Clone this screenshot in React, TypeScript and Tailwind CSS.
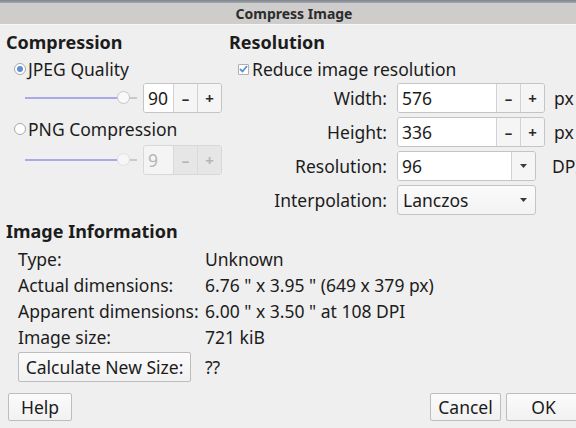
import React from 'react';

const font = { fontFamily: '"Noto Sans", "DejaVu Sans", sans-serif' };

function Radio({ checked }: { checked?: boolean }) {
  return (
    <span className="flex h-[12px] w-[12px] items-center justify-center rounded-full border border-[#a9a9a9] bg-white">
      {checked && <span className="h-[6px] w-[6px] rounded-full bg-[#5b8fd6]" />}
    </span>
  );
}

function Slider({ disabled }: { disabled?: boolean }) {
  return (
    <div className="relative h-[14px] w-[112px] shrink-0">
      <div className="absolute left-0 top-[6px] h-[2px] w-[96px] bg-[#a9a8ee]" />
      <div className="absolute left-[104px] top-[6px] h-[2px] w-[8px] bg-[#c9c9c9]" />
      <div
        className={
          'absolute left-[92px] top-0 h-[13px] w-[13px] rounded-full border ' +
          (disabled ? 'border-[#e0e0e0] bg-[#f6f6f6]' : 'border-[#c6c6c6] bg-[#f9f9f9]')
        }
      />
    </div>
  );
}

function SpinBox({
  value,
  width,
  disabled,
}: {
  value: string;
  width: string;
  disabled?: boolean;
}) {
  const btn =
    'flex w-[24px] items-center justify-center border-l text-[15px] font-bold ' +
    (disabled
      ? 'border-[#dadada] bg-[#e6e6e6] text-[#b5b5b5]'
      : 'border-[#d2d2d2] bg-[#f5f5f5] text-[#2a2a2a]');
  return (
    <div
      className={
        'flex h-[30px] shrink-0 overflow-hidden rounded-[3px] border ' +
        (disabled ? 'border-[#d8d8d8]' : 'border-[#c4c4c4]')
      }
    >
      <div
        className={
          'flex items-center pl-[4px] ' +
          width +
          (disabled ? ' bg-[#f4f4f4] text-[#b5b5b5]' : ' bg-white text-[#1c1c1c]')
        }
      >
        {value}
      </div>
      <div className={btn}>–</div>
      <div className={btn}>+</div>
    </div>
  );
}

function Arrow() {
  return (
    <svg width="7" height="4" viewBox="0 0 7 4">
      <path d="M0 0 L7 0 L3.5 4 Z" fill="#3a3a3a" />
    </svg>
  );
}

function Button({ children, className }: { children: React.ReactNode; className: string }) {
  return (
    <div
      className={
        'flex shrink-0 items-center justify-center rounded-[2px] border border-[#bdbdbd] bg-gradient-to-b from-[#fbfbfb] to-[#f1f1f1] text-[#1c1c1c] ' +
        className
      }
    >
      {children}
    </div>
  );
}

function FieldRow({ label, children }: { label: string; children: React.ReactNode }) {
  return (
    <div className="flex h-[30px] items-center">
      <div className="w-[158px] shrink-0 text-right">{label}</div>
      <div className="ml-[10px] flex items-center whitespace-nowrap">{children}</div>
    </div>
  );
}

export default function App() {
  const info: [string, string][] = [
    ['Type:', 'Unknown'],
    ['Actual dimensions:', '6.76 " x 3.95 " (649 x 379 px)'],
    ['Apparent dimensions:', '6.00 " x 3.50 " at 108 DPI'],
    ['Image size:', '721 kiB'],
  ];

  return (
    <div
      className="relative flex h-[428px] w-[576px] flex-col overflow-hidden bg-[#efefef] text-[17.5px] leading-[20px] text-[#1c1c1c]"
      style={font}
    >
      {/* window title */}
      <div className="h-[3px] bg-gradient-to-b from-[#7d848d] to-[#a3a8ae]" />
      <div className="flex h-[22px] items-center justify-center border-b border-[#f7f7f7] bg-[#cecdcb] pl-[12px] text-[14px] font-bold text-[#2c2c2c]">
        Compress Image
      </div>

      <div className="flex pt-[7px]">
        {/* compression */}
        <div className="flex w-[229px] shrink-0 flex-col pl-[6px]">
          <div className="h-[22px] text-[18px] font-bold">Compression</div>
          <div className="mt-[2px] flex h-[26px] items-center gap-[2px] pl-[8px]">
            <Radio checked />
            <span>JPEG Quality</span>
          </div>
          <div className="mt-[1px] flex h-[30px] items-center pl-[19px]">
            <Slider />
            <div className="ml-[6px]">
              <SpinBox value="90" width="w-[29px]" />
            </div>
          </div>
          <div className="mt-[3px] flex h-[26px] items-center gap-[2px] pl-[8px]">
            <Radio />
            <span>PNG Compression</span>
          </div>
          <div className="mt-[3px] flex h-[30px] items-center pl-[19px]">
            <Slider disabled />
            <div className="ml-[6px]">
              <SpinBox value="9" width="w-[29px]" disabled />
            </div>
          </div>
        </div>

        {/* resolution */}
        <div className="flex min-w-0 flex-1 flex-col">
          <div className="h-[22px] text-[18px] font-bold">Resolution</div>
          <div className="mt-[2px] flex h-[26px] items-center gap-[3px] pl-[9px]">
            <span className="flex h-[11px] w-[11px] items-center justify-center rounded-[1px] border border-[#b0b0b0] bg-white">
              <svg width="9" height="8" viewBox="0 0 9 8">
                <path d="M1 4 L3.5 6.5 L8 1" stroke="#5b8fd6" strokeWidth="1.8" fill="none" />
              </svg>
            </span>
            <span>Reduce image resolution</span>
          </div>
          <div className="mt-[1px] flex flex-col gap-[4px]">
            <FieldRow label="Width:">
              <SpinBox value="576" width="w-[98px]" />
              <span className="ml-[9px]">px</span>
            </FieldRow>
            <FieldRow label="Height:">
              <SpinBox value="336" width="w-[98px]" />
              <span className="ml-[9px]">px</span>
            </FieldRow>
            <FieldRow label="Resolution:">
              <div className="flex h-[30px] w-[139px] shrink-0 overflow-hidden rounded-[3px] border border-[#c4c4c4]">
                <div className="flex flex-1 items-center bg-white pl-[4px]">96</div>
                <div className="flex w-[24px] items-center justify-center border-l border-[#d2d2d2] bg-[#f5f5f5]">
                  <Arrow />
                </div>
              </div>
              <span className="ml-[16px]">DPI</span>
            </FieldRow>
            <FieldRow label="Interpolation:">
              <div className="flex h-[30px] w-[139px] shrink-0 items-center justify-between rounded-[3px] border border-[#c4c4c4] bg-gradient-to-b from-[#fbfbfb] to-[#f3f3f3] pl-[5px] pr-[8px]">
                <span>Lanczos</span>
                <Arrow />
              </div>
            </FieldRow>
          </div>
        </div>
      </div>

      {/* image information */}
      <div className="mt-[6px] flex flex-col pl-[6px]">
        <div className="h-[22px] text-[18px] font-bold">Image Information</div>
        <div className="mt-[3px] flex flex-col pl-[12px]">
          {info.map(([k, v]) => (
            <div key={k} className="flex h-[26px] items-center">
              <div className="w-[187px] shrink-0">{k}</div>
              <div className="whitespace-nowrap">{v}</div>
            </div>
          ))}
          <div className="mt-[2px] flex h-[30px] items-center">
            <div className="w-[187px] shrink-0">
              <Button className="h-[30px] w-[173px]">Calculate New Size:</Button>
            </div>
            <div>??</div>
          </div>
        </div>
      </div>

      {/* buttons */}
      <div className="mt-[11px] flex items-center px-[8px]">
        <Button className="h-[28px] w-[64px]">Help</Button>
        <div className="flex-1" />
        <Button className="h-[28px] w-[71px]">Cancel</Button>
        <Button className="ml-[5px] mr-[-13px] h-[28px] w-[75px]">OK</Button>
      </div>
    </div>
  );
}
